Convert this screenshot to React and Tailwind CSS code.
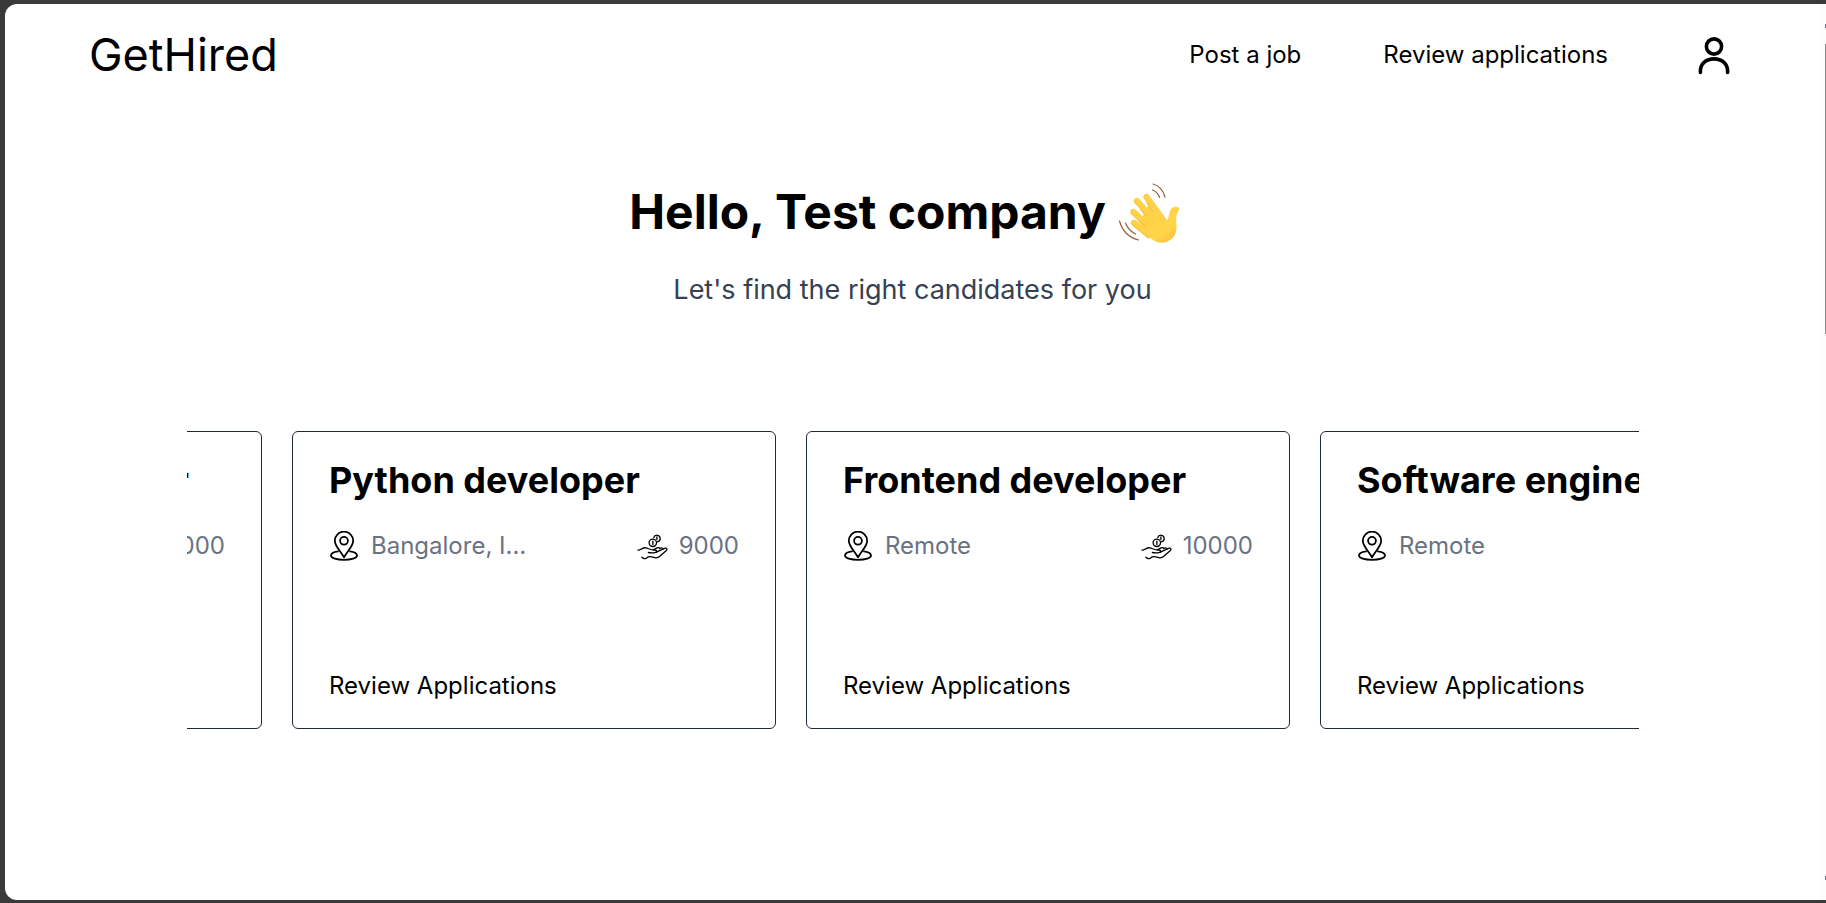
const jobs = [
  { title: "JavaScript developer", location: "Remote", salary: "12000" },
  { title: "Python developer", location: "Bangalore, India", salary: "9000" },
  { title: "Frontend developer", location: "Remote", salary: "10000" },
  { title: "Software engineer", location: "Remote", salary: "15000" },
];

function UserIcon() {
  return (
    <svg viewBox="0 0 48 48" className="size-12" fill="none" stroke="#000" strokeWidth="3.6" strokeLinecap="round" aria-hidden="true">
      <circle cx="24" cy="15.500" r="7.6" />
      <path d="M10.400 41.500v-1.400C10.400 32.700 16.400 27.900 24 27.900S37.600 32.700 37.600 40.100V41.500" />
    </svg>
  );
}

function PinIcon() {
  return (
    <svg viewBox="0 0 30 30" className="size-[30px] shrink-0" fill="none" stroke="#000" strokeWidth="1.8" strokeLinejoin="round" strokeLinecap="round" aria-hidden="true">
      <path d="M15 26.4C12.8 21.4 5.8 15.6 5.8 9.8a9.2 9.2 0 0 1 18.4 0C24.2 15.6 17.2 21.4 15 26.4Z" />
      <circle cx="15" cy="9.8" r="3.9" />
      <path d="M9 20.3C4.8 20.9 2 22.6 2 24.6c0 2.6 5.8 4.3 13 4.3s13-1.700 13-4.300c0-2-2.800-3.700-7-4.300" />
    </svg>
  );
}

function MoneyIcon() {
  return (
    <svg viewBox="0 0 32 30" className="h-[30px] w-8 shrink-0" fill="none" stroke="#000" strokeWidth="1.3" strokeLinejoin="round" strokeLinecap="round" aria-hidden="true">
      <circle cx="15.800" cy="11.800" r="3.700" />
      <path d="M15.900 10.200v3.200" />
      <path d="M16.800 6.500a3.300 3.300 0 1 1 3.600 4.300M19.900 6v2.600" />
      <path d="M1 19.200c3.400-.200 4.400-2.800 7.600-2.400 3 .400 4.400 2.400 9.200 2.200 2.400 0 2.400 2.400.200 2.700-2.400.400-4.600.300-6.600-.200" />
      <path d="M19.300 21.200l8.300-3.800c2-.700 3.200.800 1.800 2.200l-7.200 6.200c-1.200 1-2.600 1.200-4.200.800l-4.600-.900c-1.600-.200-2.600.200-3.800 1.200-1.500 1.200-3.300.800-4.800-.700" />
      <path d="M16.600 18.600l3.400-1.700c1.400-.600 2.600-.200 2.800.700M22.800 17.400l1-.400c1.200-.400 2 .200 2.200.900" />
    </svg>
  );
}

function WaveIcon() {
  return (
    <svg viewBox="0 0 62 62" className="size-[62px] shrink-0" aria-label="Waving hand" role="img">
      <defs>
        <linearGradient id="skin" x1="0.2" y1="0" x2="0.8" y2="1">
          <stop offset="0" stopColor="#ffd24a" />
          <stop offset="0.75" stopColor="#ffd54a" />
          <stop offset="1" stopColor="#f7bd40" />
        </linearGradient>
      </defs>
      <g stroke="#f9c23c" strokeWidth="6.2" strokeLinecap="round">
        <path d="M16 42L31 54" />
        <path d="M15.500 31L34 49" />
        <path d="M19 20L39 43" />
        <path d="M28.500 16L45 39" />
      </g>
      <path d="M33 20l13 18c1.500 1.600 3 1.200 4-.800 1.800-3.600 1-7.600 4-10.200 2.600-2.200 8.400-1.800 6.900 2-2 3.800-3.100 6.200-2.700 10.400.6 6.600 1 12.600-3.600 17.600-6.600 6.600-15.600 6.200-22.400-.200L19 45.500 26 32z" fill="url(#skin)" />
      <g stroke="#ffd24a" strokeWidth="5" strokeLinecap="round">
        <path d="M16.300 41.700L31 53" />
        <path d="M15.800 30.700L34 48" />
        <path d="M19.300 19.700L39 42" />
        <path d="M28.700 15.700L45 38" />
      </g>
      <g stroke="#edab33" strokeWidth="0.8" strokeLinecap="round" fill="none">
        <path d="M21.500 39.700l5.500 5M22.500 28.700l6 6.500M28.500 21.700l6 8.500" />
      </g>
      <g stroke="#946038" strokeWidth="1.2" strokeLinecap="round" fill="none">
        <path d="M35 3c5.600 1.200 10.600 6.600 12 13M34.500 9c3.400 1.200 5.800 3.800 7 7.500" />
        <path d="M1.500 40c2.600 9.200 9.400 16.600 19 19M7.500 42c1.800 4.800 5.200 8.600 10 11" />
      </g>
    </svg>
  );
}

function JobCard({ title, location, salary }) {
  return (
    <li className="flex h-[298px] w-1/3 shrink-0 flex-col rounded-md border border-gray-800 px-9 pt-6 pb-6">
      <h2 className="truncate text-4xl leading-[48px] font-bold">{title}</h2>
      <div className="mt-6 flex items-center justify-between text-2xl leading-9 text-gray-500">
        <div className="flex items-center gap-3">
          <PinIcon />
          <span className="w-40 truncate">{location}</span>
        </div>
        <div className="flex items-center gap-2.5">
          <MoneyIcon />
          <span>{salary}</span>
        </div>
      </div>
      <a href="#applications" className="mt-auto self-start text-2xl leading-9">
        Review Applications
      </a>
    </li>
  );
}

export default function App() {
  return (
    <div className="flex min-h-screen bg-[#3a3a3a] pt-1 pb-[3px] pl-[5px] font-['Inter',sans-serif] text-black">
      <div className="flex min-w-0 flex-1 overflow-hidden rounded-l-xl bg-white">
        <div className="min-w-0 flex-1">
          <header className="flex h-[102px] items-center justify-between pr-[82px] pl-[84px]">
            <a href="#home" className="text-[45px] leading-[54px]">GetHired</a>
            <nav className="flex items-center gap-[82px] text-2xl">
              <a href="#post">Post a job</a>
              <a href="#review">Review applications</a>
              <button type="button" aria-label="Account">
                <UserIcon />
              </button>
            </nav>
          </header>
          <main className="pt-[70px]">
            <div className="flex flex-col items-center">
              <h1 className="flex items-center gap-3 pr-4 text-5xl leading-[72px] font-bold">
                Hello, Test company
                <WaveIcon />
              </h1>
              <p className="mt-[21px] text-[27px] leading-[42px] text-gray-700">
                Let's find the right candidates for you
              </p>
            </div>
            <section className="mt-[120px] mr-[181px] ml-[182px] overflow-hidden" aria-label="Your jobs">
              <ul className="flex -translate-x-[409px] gap-[30px]">
                {jobs.map((job) => (
                  <JobCard key={job.title} {...job} />
                ))}
              </ul>
            </section>
          </main>
        </div>
        <div className="flex w-1.5 shrink-0 flex-col items-end justify-between bg-[#fcfcfc] pt-5 pb-5">
          <div className="flex flex-col gap-4">
            <div className="h-1 w-px bg-gray-500" />
            <div className="h-[290px] w-px bg-[#8a8a8a]" />
          </div>
          <div className="h-1 w-px bg-gray-500" />
        </div>
      </div>
    </div>
  );
}
